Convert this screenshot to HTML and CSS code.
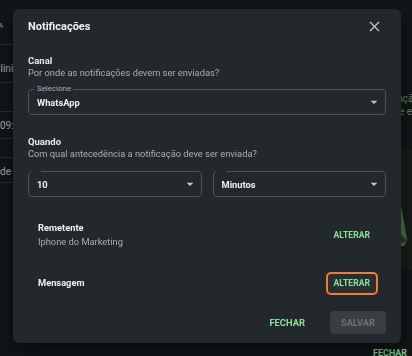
FILE: index.html
```html
<!DOCTYPE html>
<html lang="pt-BR">
<head>
  <meta charset="UTF-8">
  <meta name="viewport" content="width=device-width, initial-scale=1.0">
  <title>Notificações</title>
  <link rel="stylesheet" href="styles.css">
</head>
<body>
  <div class="page">
    <aside class="list">
      <div class="list-row head"><span class="cut-head">DATA</span></div>
      <div class="list-row r2"><span class="cut-word">Clinica</span></div>
      <div class="list-row r3"></div>
      <div class="list-row r4">09:30</div>
      <div class="list-row r5"></div>
      <div class="list-row r6">de rotina</div>
    </aside>
    <main class="chat">
      <div class="chat-text">Confirmação<br>Lembrete em</div>
      <div class="chat-media">
        <svg width="55" height="120" viewBox="0 0 55 120">
          <polygon points="38,50 42,72 45,90 42,96 35,96" fill="#4b6e49"/>
          <polygon points="39,84 45,91 38,94" fill="#2a3a29"/>
        </svg>
      </div>
      <div class="chat-actions">FECHAR</div>
    </main>
  </div>

  <div class="modal">
    <div class="modal-header">
      <h1 class="modal-title">Notificações</h1>
      <button type="button" class="close-btn" aria-label="Fechar">
        <svg width="11" height="11" viewBox="0 0 11 11">
          <path d="M1 1L10 10M10 1L1 10" stroke="#c4c8cb" stroke-width="1.3" fill="none"/>
        </svg>
      </button>
    </div>

    <div class="modal-body">
      <div class="section-title first">Canal</div>
      <div class="section-sub">Por onde as notificações devem ser enviadas?</div>
      <div class="field field-canal labeled">
        <span class="field-label">Selecione</span>
        <span class="field-value">WhatsApp</span>
        <svg class="arrow" width="16" height="16" viewBox="0 0 24 24"><path d="M7 10l5 5 5-5z" fill="#c4c8cb"/></svg>
      </div>

      <div class="section-title">Quando</div>
      <div class="section-sub">Com qual antecedência a notificação deve ser enviada?</div>
      <div class="field-row">
        <div class="field">
          <span class="field-value">10</span>
          <svg class="arrow" width="16" height="16" viewBox="0 0 24 24"><path d="M7 10l5 5 5-5z" fill="#c4c8cb"/></svg>
        </div>
        <div class="field">
          <span class="field-value">Minutos</span>
          <svg class="arrow" width="16" height="16" viewBox="0 0 24 24"><path d="M7 10l5 5 5-5z" fill="#c4c8cb"/></svg>
        </div>
      </div>

      <div class="options">
        <div class="option">
          <div>
            <div class="option-name">Remetente</div>
            <div class="option-detail">Iphone do Marketing</div>
          </div>
          <button type="button" class="text-btn small">ALTERAR</button>
        </div>
        <div class="option">
          <div class="option-name">Mensagem</div>
          <button type="button" class="text-btn small focused">ALTERAR</button>
        </div>
      </div>
    </div>

    <div class="modal-footer">
      <button type="button" class="text-btn">FECHAR</button>
      <button type="button" class="save-btn" disabled>SALVAR</button>
    </div>
  </div>
</body>
</html>
```

FILE: styles.css
```css
body {
  margin: 0;
  background-color: #121619;
  font-family: Roboto, "Noto Sans", Arial, sans-serif;
  color: #e8eaec;
  overflow: hidden;
  height: 356px;
}

/* page behind the dialog */
.page {
  display: flex;
  height: 356px;
}

.list {
  width: 160px;
  flex-shrink: 0;
  font-size: 10px;
  line-height: 10px;
  color: #aab0b4;
  white-space: nowrap;
  overflow: hidden;
}

.list-row {
  box-sizing: border-box;
  border-bottom: 1px solid #2a2f33;
}

.list-row.head { height: 45px; padding-top: 21px; font-size: 7px; color: #8c9296; }
.list-row.r2 { height: 38px; padding-top: 19px; }
.list-row.r3 { height: 29px; }
.list-row.r4 { height: 27px; padding-top: 9px; }
.list-row.r5 { height: 19px; }
.list-row.r6 { height: 25px; padding-top: 9px; }

.cut-head { display: inline-block; text-indent: -14px; }
.cut-word { display: inline-block; text-indent: -6px; }

.chat {
  flex: 1;
  margin-left: 202px;
  display: flex;
  flex-direction: column;
  overflow: hidden;
}

.chat-text {
  margin-top: 92px;
  font-size: 10px;
  line-height: 13px;
  color: #5f8656;
  white-space: nowrap;
}

.chat-media {
  margin-top: 32px;
  height: 120px;
  background-color: #171d19;
}

.chat-actions {
  margin-top: 78px;
  padding-left: 11px;
  font-size: 9px;
  font-weight: 700;
  color: #7fc98a;
}

/* dialog */
.modal {
  position: fixed;
  left: 13px;
  top: 9px;
  width: 388px;
  box-sizing: border-box;
  background-color: #22282b;
  border-radius: 6px;
  box-shadow: 0 6px 20px rgba(0, 0, 0, 0.5);
}

.modal-header {
  height: 34px;
  display: flex;
  align-items: center;
  justify-content: space-between;
  padding: 0 15px;
}

.modal-title {
  margin: 0;
  font-size: 11px;
  font-weight: 700;
  color: #eef0f2;
}

.close-btn {
  width: 24px;
  height: 24px;
  padding: 0;
  border: none;
  background: none;
  display: flex;
  align-items: center;
  justify-content: center;
}

.modal-body {
  padding: 0 15px;
}

.section-title {
  margin-top: 21px;
  font-size: 9.5px;
  line-height: 12px;
  font-weight: 700;
  color: #e8eaec;
}

.section-title.first {
  margin-top: 12px;
}

.section-sub {
  font-size: 9.3px;
  line-height: 12px;
  color: #a9aeb2;
}

.field {
  position: relative;
  height: 26px;
  box-sizing: border-box;
  border: 1px solid #4c5256;
  border-radius: 4px;
  display: flex;
  align-items: center;
  justify-content: space-between;
  padding: 0 3px 0 8px;
}

/* notch left by the outlined label */
.field::before {
  content: '';
  position: absolute;
  top: -1px;
  left: 2px;
  width: 10px;
  height: 1px;
  background-color: #22282b;
}

.field.labeled::before {
  display: none;
}

.field-canal {
  margin-top: 10px;
}

.field-label {
  position: absolute;
  top: -6px;
  left: 6px;
  padding: 0 2px;
  background-color: #22282b;
  font-size: 7.9px;
  line-height: 10px;
  color: #a9aeb2;
}

.field-value {
  font-size: 9.3px;
  font-weight: 700;
  color: #eef0f2;
}

.field-row {
  margin-top: 11px;
  display: flex;
  gap: 11px;
}

.field-row .field {
  flex: 1;
}

.options {
  margin-top: 14px;
}

.option {
  min-height: 48px;
  display: flex;
  align-items: center;
  justify-content: space-between;
  padding: 0 8px 0 10px;
}

.option-name {
  font-size: 9.3px;
  line-height: 14px;
  font-weight: 700;
  color: #eef0f2;
}

.option-detail {
  font-size: 9.3px;
  line-height: 14px;
  color: #a9aeb2;
}

.text-btn {
  height: 23px;
  padding: 0 6px;
  border: 2px solid transparent;
  border-radius: 5px;
  background: none;
  font-family: inherit;
  font-size: 9.4px;
  font-weight: 700;
  color: #8de09a;
}

.text-btn.small {
  font-size: 8.6px;
}

.text-btn.focused {
  border-color: #ee7a3e;
  background-color: rgba(141, 224, 154, 0.05);
}

.modal-footer {
  margin-top: 4px;
  padding: 0 15px 9px;
  display: flex;
  justify-content: flex-end;
  align-items: center;
  gap: 17px;
}

.save-btn {
  width: 56px;
  height: 23px;
  border: none;
  border-radius: 4px;
  background-color: #383e42;
  font-family: inherit;
  font-size: 9.3px;
  font-weight: 700;
  color: #6c7276;
}
```
